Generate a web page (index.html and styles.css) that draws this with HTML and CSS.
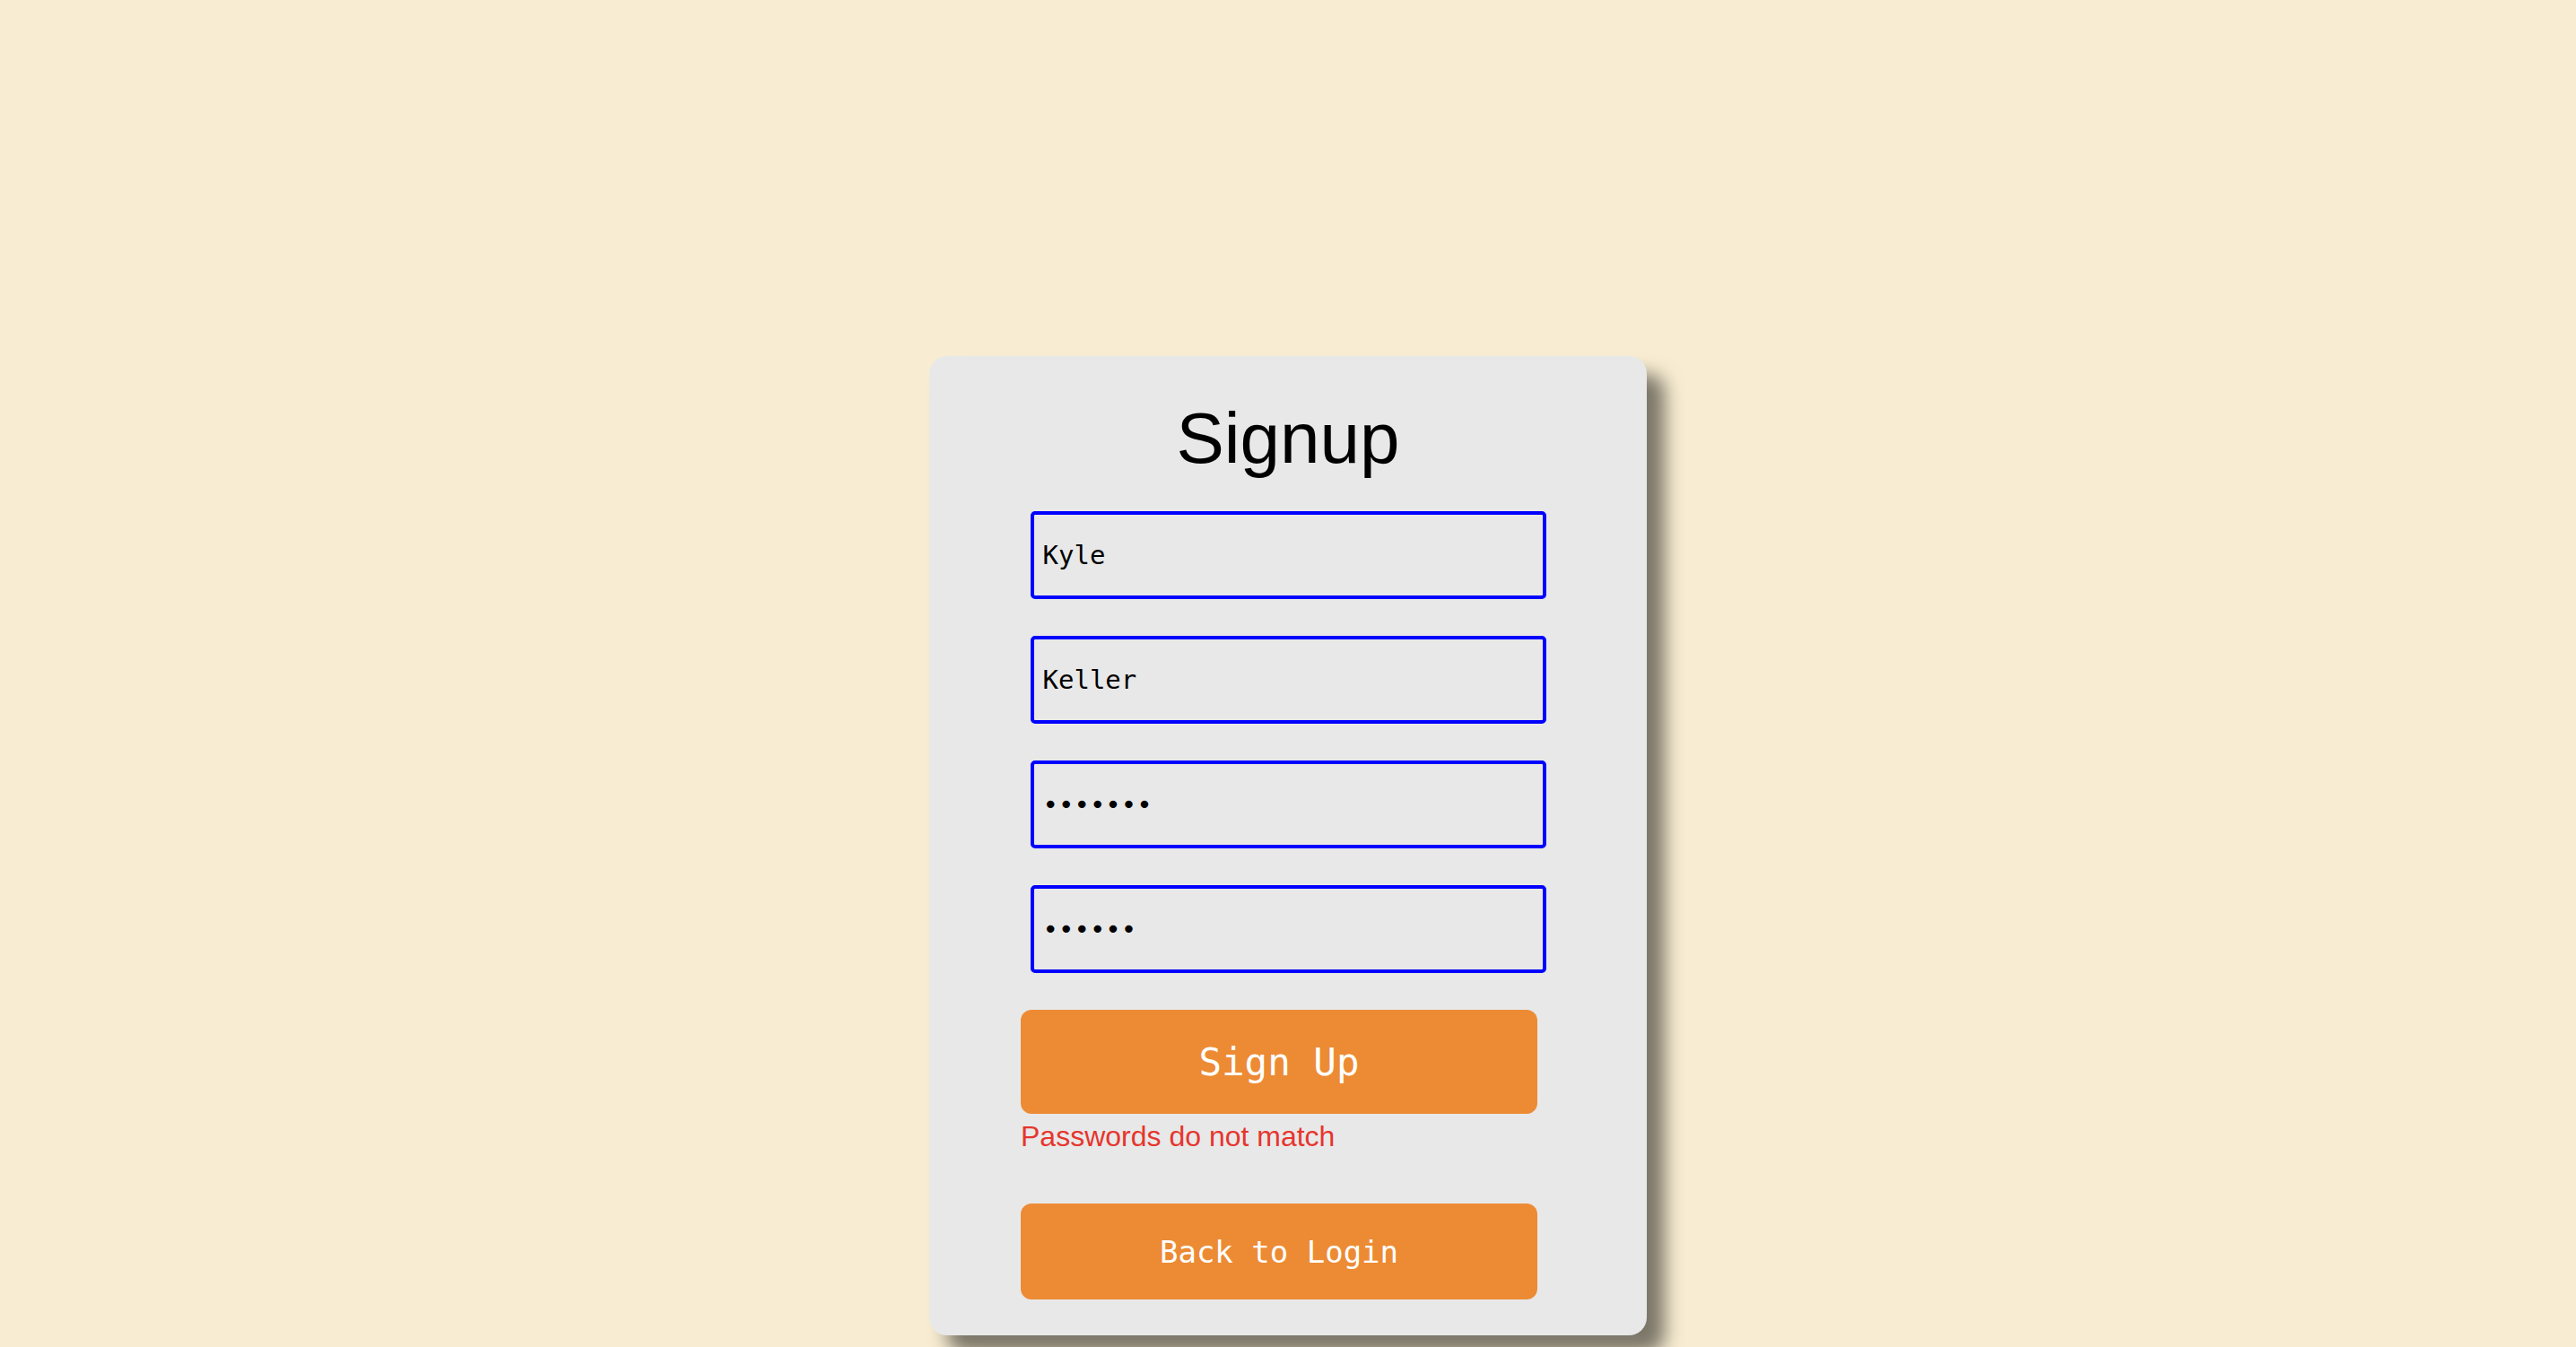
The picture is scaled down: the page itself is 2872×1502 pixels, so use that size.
FILE: index.html
```html
<!DOCTYPE html>
<html lang="en">
<head>
<meta charset="utf-8">
<title>Signup</title>
<link rel="stylesheet" href="styles.css">
</head>
<body>
<main class="page">
  <section class="card">
    <h1 class="title">Signup</h1>
    <form class="form" onsubmit="return false;">
      <input class="field" type="text" value="Kyle" aria-label="First name">
      <input class="field" type="text" value="Keller" aria-label="Last name">
      <input class="field" type="password" value="1234567" aria-label="Password">
      <input class="field" type="password" value="123456" aria-label="Confirm password">
      <div class="actions">
        <button class="btn btn-primary" type="submit">Sign Up</button>
        <p class="error">Passwords do not match</p>
        <button class="btn btn-secondary" type="button">Back to Login</button>
      </div>
    </form>
  </section>
</main>
</body>
</html>
```

FILE: styles.css
```css
html, body {
  margin: 0;
  padding: 0;
}

body {
  background: #f8edd2;
  min-height: 100vh;
  font-family: "Liberation Sans", Arial, sans-serif;
}

.page {
  display: flex;
  justify-content: center;
  padding-top: 397px;
}

.card {
  box-sizing: border-box;
  width: 800px;
  padding: 46px 0 40px;
  background: #e8e8e8;
  border-radius: 20px;
  box-shadow: 20px 20px 20px rgba(0, 0, 0, 0.5);
}

.title {
  margin: 0;
  font-family: "Liberation Sans", Arial, sans-serif;
  font-weight: 400;
  font-size: 80px;
  line-height: 92px;
  text-align: center;
  color: #000;
}

.form {
  display: flex;
  flex-direction: column;
  align-items: center;
  gap: 41px;
  margin-top: 35px;
}

.field {
  box-sizing: border-box;
  width: 575px;
  height: 98px;
  margin: 0;
  padding: 0 10px;
  border: 4px solid #0000ff;
  border-radius: 5px;
  background: transparent;
  outline: none;
  font-family: "DejaVu Sans Mono", monospace;
  font-size: 29px;
  color: #000;
}

.actions {
  display: flex;
  flex-direction: column;
  width: 576px;
  margin-right: 20px;
}

.btn {
  display: flex;
  align-items: center;
  justify-content: center;
  box-sizing: border-box;
  width: 100%;
  margin: 0;
  padding: 0;
  border: none;
  border-radius: 12px;
  background: #ec8b34;
  color: #fff;
  font-family: "DejaVu Sans Mono", monospace;
  cursor: pointer;
}

.btn-primary {
  height: 116px;
  font-size: 42.5px;
}

.btn-secondary {
  height: 107px;
  font-size: 34px;
  margin-top: 56px;
}

.error {
  margin: 7px 0 0;
  font-family: "Liberation Sans", Arial, sans-serif;
  font-size: 32px;
  line-height: 37px;
  color: #e6352d;
}
```
